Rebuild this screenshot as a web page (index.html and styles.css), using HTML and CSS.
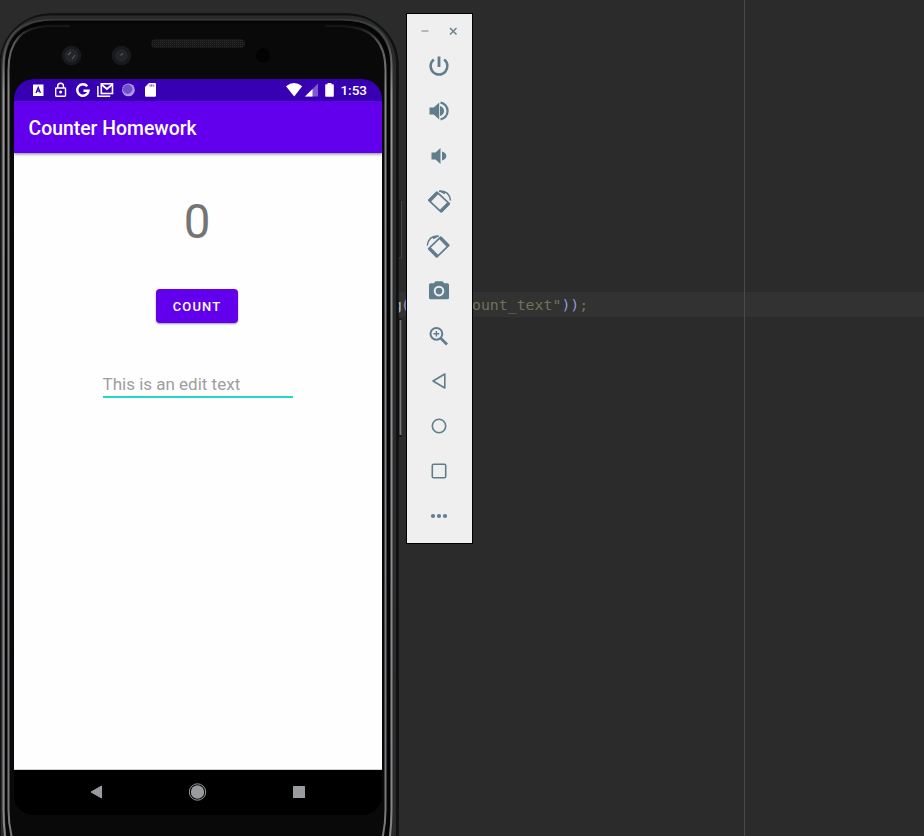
FILE: index.html
```html
<!DOCTYPE html>
<html lang="en">
<head>
<meta charset="utf-8">
<title>Counter Homework</title>
<link rel="stylesheet" href="styles.css">
</head>
<body>
<main class="desktop">
  <div class="code-line"><span class="code-start">g<b>(</b></span><span class="code-end">ount_text"<b>))</b>;</span></div>
  <div class="margin-guide"></div>

  <section class="phone">
    <svg class="frame" width="406" height="836" viewBox="0 0 406 836" fill="none">
      <defs>
        <linearGradient id="shine" x1="0" y1="0" x2="0" y2="1">
          <stop offset="0" stop-color="#3a3b3b"/><stop offset=".03" stop-color="#4c4c4c"/><stop offset=".09" stop-color="#97979a"/><stop offset="1" stop-color="#85858a"/>
        </linearGradient>
        <linearGradient id="inner" x1="0" y1="0" x2="0" y2="1">
          <stop offset="0" stop-color="#151515"/><stop offset=".02" stop-color="#555"/><stop offset=".08" stop-color="#88888c"/><stop offset="1" stop-color="#77777a"/>
        </linearGradient>
        <pattern id="mesh" width="2" height="2" patternUnits="userSpaceOnUse">
          <rect width="2" height="2" fill="#171717"/><rect width="1" height="1" fill="#2c2c2c"/>
        </pattern>
      </defs>
      <rect x="397" y="200" width="5" height="59" rx="1" fill="#202222"/>
      <path d="M401.500 201v57h-4" stroke="#454747"/>
      <rect x="397" y="319" width="5" height="118" rx="1" fill="#171717"/>
      <path d="M400.500 320v115" stroke="#777" stroke-width="2"/>
      <rect x="-.5" y="13.500" width="399" height="870" rx="52" fill="#090909"/>
      <rect x="1" y="15" width="396" height="867" rx="50" stroke="#101111" stroke-width="3"/>
      <rect x="3.500" y="18" width="390" height="861" rx="46" stroke="#292a2a" stroke-width="5"/>
      <path d="M5.500 840Q3.500 825 3.500 810V66Q3.500 20 52 20H344Q391.500 20 391.500 66V810Q391.500 825 389.500 840" stroke="url(#shine)" stroke-width="2"/>
      <path d="M9 840Q6.500 825 6.500 810V67Q6.500 22 56 22H340Q388.500 22 388.500 67V810Q388.500 825 386 840" stroke="#050505" stroke-width="3"/>
      <path d="M12.500 840Q8.500 825 8.500 810V70Q8.500 27 48 26H70M325 26H342Q385.500 27 385.500 70V810Q385.500 825 382 840" stroke="url(#inner)" stroke-width="2"/>
      <rect x="151" y="39" width="94" height="9" rx="4.500" fill="url(#mesh)"/>
      <g fill="#171a1c"><circle cx="71.500" cy="55.500" r="9.800"/><circle cx="121.500" cy="55.500" r="9.800"/></g>
      <g stroke="#292c2e" fill="#222426"><circle cx="71.500" cy="55.500" r="6"/><circle cx="121.500" cy="55.500" r="5.500"/></g>
      <path d="M68 55l3-3M72 59l3-4M120.500 55.500l2.500-2" stroke="#565a5c" stroke-width="1.200"/>
      <circle cx="263" cy="55.500" r="7" fill="#020202"/>
    </svg>

    <div class="screen">
      <header class="status-bar">
        <svg width="140" height="22" viewBox="28 79 140 22" fill="none" stroke="#fff">
          <rect x="33" y="84.500" width="10.500" height="11.500" fill="#fff" stroke="none"/>
          <path d="M36 93l2.200-5.500 2.200 5.500M36.800 91.200h2.800" stroke="#3700b3" stroke-width="1.300"/>
          <rect x="55.700" y="88" width="9.800" height="8.200" rx=".7" stroke-width="1.400"/>
          <path d="M57.700 88v-1.800a2.900 2.900 0 0 1 5.800 0V88" stroke-width="1.400"/><circle cx="60.600" cy="92" r="1.500" fill="#fff" stroke="none"/>
          <path d="M87.300 86.300a5.700 5.700 0 1 0 1.300 4.400H83.500" stroke-width="2.400"/>
          <path d="M97.900 86v10.200h12.300" stroke-width="1.500"/><rect x="101.300" y="83.800" width="11.200" height="9.700" stroke-width="1.600"/><path d="M101.500 84.500l5.400 4.500 5.400-4.500" stroke-width="1.800"/>
          <circle cx="128.400" cy="89.900" r="6.400" fill="#b19be4" stroke="none"/><circle cx="127.600" cy="89.200" r="4.800" fill="#7051cb" stroke="#9278d8" stroke-dasharray="1 1"/>
          <path d="M149 83h6a1.300 1.300 0 0 1 1 1v11.700a1.300 1.300 0 0 1-1 1h-9a1.300 1.300 0 0 1-1-1V87z" fill="#fff" stroke="none"/><path d="M149.500 85.500h5" stroke="#6c47ca" stroke-width="2" stroke-dasharray="1 .6"/>
        </svg>
        <div class="status-right">
          <svg width="50" height="22" viewBox="285 79 50 22">
            <path d="M286 86.200q8-6.400 16.200 0L294.200 96.500z" fill="#fff"/>
            <path d="M305 96.500L318 83.500v13z" fill="#8059ce"/><path d="M305 96.500l7.500-7.500v7.500z" fill="#fff"/>
            <path d="M327.500 83h4v1.200h1.500q.8 0 .8.800v11q0 .8-.8.800h-7q-.8 0-.8-.8V85q0-.8.8-.8h1.500z" fill="#fff"/>
          </svg>
          <span class="clock">1:53</span>
        </div>
      </header>
      <h1 class="app-bar">Counter Homework</h1>
      <div class="content">
        <div class="counter">0</div>
        <button class="count-button">COUNT</button>
        <div class="edit-text">This is an edit text</div>
      </div>
      <nav class="nav-bar">
        <svg width="20" height="20"><path d="M3 9L13.500 3v12z" fill="#999b9e" stroke="#999b9e" stroke-linejoin="round"/></svg>
        <svg width="20" height="20"><circle cx="8.500" cy="9" r="8.200" fill="none" stroke="#999b9e" stroke-width="1"/><circle cx="8.500" cy="9" r="6.700" fill="#999b9e"/></svg>
        <svg width="20" height="20"><rect x="4" y="3" width="12" height="12" rx=".6" fill="#999b9e"/></svg>
      </nav>
    </div>
  </section>

  <aside class="toolbar">
    <div class="window-controls">
      <svg width="12" height="12"><path d="M2.500 6h7" stroke="#9ba9af" stroke-width="1.500"/></svg>
      <svg width="12" height="12"><path d="M3 3l6.500 6.500M9.500 3L3 9.500" stroke="#6a828d" stroke-width="1.500"/></svg>
    </div>
    <div class="tools">
      <svg viewBox="0 0 30 30"><path d="M15 5.500v10.500" stroke-width="2.800"/><path d="M9.800 8.500a8.400 8.400 0 1 0 10.400 0" stroke-width="2.500"/></svg>
      <svg viewBox="0 0 30 30"><path d="M5.500 11.500h4.200l5.500-5v17l-5.500-5H5.500z" class="solid"/><path d="M16 10q4 1.300 4 5t-4 5z" class="solid"/><path d="M16.500 6.700a8.400 8.400 0 0 1 0 16.600" stroke-width="2.200"/></svg>
      <svg viewBox="0 0 30 30"><path d="M7.500 11.500h4l5-4.500v16l-5-4.500h-4z" class="solid"/><path d="M18 10.500q4.300 1.300 4.300 4.500T18 19.500z" class="solid"/></svg>
      <svg viewBox="0 0 30 30"><path d="M4.800 14.400l8.200-8.200L25.300 17.700l-8.200 8.200z" stroke-width="1.700" stroke-linejoin="round"/><path d="M5.500 14.700l7.800-7.800M16.800 25.200l7.800-7.800" stroke-width="3.400"/><path d="M15 5.200q10-1 11.500 9.300M16 5l5 2.500" stroke-width="1.500"/></svg>
      <svg viewBox="0 0 30 30"><path d="M24.800 14.400l-8.200-8.200L4.700 17.700l8.200 8.200z" stroke-width="1.700" stroke-linejoin="round"/><path d="M24.100 14.700l-7.800-7.800M13.200 25.200l-7.800-7.800" stroke-width="3.400"/><path d="M14.800 5.200Q4.800 4.200 3.300 14.500M14 5L9 7.500" stroke-width="1.500"/></svg>
      <svg viewBox="0 0 30 30"><path fill-rule="evenodd" class="solid" d="M11.500 5.300h7l1.700 2H23.500q1.500 0 1.500 1.500v13q0 1.500-1.500 1.500h-17Q5 23.300 5 21.800v-13Q5 7.300 6.500 7.300h3.300zM15 9.800a5.300 5.300 0 1 0 0 10.600 5.300 5.300 0 0 0 0-10.600z"/><circle cx="15" cy="15.100" r="3.300" class="solid"/></svg>
      <svg viewBox="0 0 30 30"><circle cx="12.400" cy="12.800" r="5.900" stroke-width="2"/><path d="M16.500 17l6.500 6.500" stroke-width="2.700"/><path d="M9.500 12.800h5.800M12.400 10v5.600" stroke-width="1.400"/></svg>
      <svg viewBox="0 0 30 30"><path d="M9 15L20.800 8v14z" stroke-width="1.600" stroke-linejoin="round"/></svg>
      <svg viewBox="0 0 30 30"><circle cx="15" cy="15" r="6.700" stroke-width="1.600"/></svg>
      <svg viewBox="0 0 30 30"><rect x="8.300" y="8.300" width="13.400" height="13.400" rx="1.300" stroke-width="1.600"/></svg>
      <svg viewBox="0 0 30 30"><g class="solid"><circle cx="9" cy="15" r="2.100"/><circle cx="15" cy="15" r="2.100"/><circle cx="21" cy="15" r="2.100"/></g></svg>
    </div>
  </aside>
</main>
</body>
</html>
```
FILE: styles.css
```css
* { box-sizing: border-box; }
body { margin: 0; background: #2b2b2b; }
svg { display: block; flex: none; }
.desktop {
  position: relative;
  width: 924px;
  height: 836px;
  overflow: hidden;
  background: #2b2b2b;
  font-family: Roboto, sans-serif;
}
.code-line {
  position: absolute;
  top: 292px;
  left: 0;
  width: 100%;
  height: 25px;
  padding-left: 393px;
  display: flex;
  background: #323232;
  color: #6e7359;
  font: 14.850px/26px "DejaVu Sans Mono", monospace;
}
.code-line b { font-weight: 400; color: #9597d0; }
.code-start { width: 79px; color: #a9b7c6; }
.code-start b { margin-left: -1px; }
.margin-guide {
  position: absolute;
  left: 744px;
  top: 0;
  width: 1px;
  height: 100%;
  background: #4a4a4a;
}
.phone { position: absolute; left: 0; top: 0; width: 406px; height: 836px; }
.frame { position: absolute; inset: 0; }
.screen {
  position: absolute;
  left: 14px;
  top: 79px;
  width: 368px;
  height: 736px;
  display: flex;
  flex-direction: column;
  overflow: hidden;
  border-radius: 20px;
  background: #000;
}
.status-bar {
  height: 22px;
  padding: 0 15px 0 14px;
  display: flex;
  justify-content: space-between;
  background: #3700b3;
}
.status-right { display: flex; gap: 5px; }
.clock { color: #fff; font-size: 13.500px; font-weight: 500; line-height: 23px; }
.app-bar {
  position: relative;
  height: 52px;
  margin: 0;
  padding-left: 14.500px;
  background: #6200ee;
  color: #fff;
  font-size: 19.400px;
  font-weight: 500;
  line-height: 55px;
  box-shadow: 0 1px 3px rgba(0, 0, 0, .5);
}
.content {
  flex: 1;
  padding: 39px 2px 0 0;
  display: flex;
  flex-direction: column;
  align-items: center;
  border-bottom: 1px solid #ccd0d0;
  background: #fefefe;
}
.counter { height: 60px; color: #747474; font-size: 47.500px; line-height: 60px; }
.count-button {
  width: 82px;
  height: 34px;
  margin-top: 37px;
  padding: 2px 0 0;
  border: 0;
  border-radius: 4px;
  background: #6200ee;
  color: #fff;
  font: 500 13px/32px Roboto, sans-serif;
  letter-spacing: 1.150px;
  box-shadow: 0 1px 2px rgba(0, 0, 0, .4);
}
.edit-text {
  width: 190px;
  height: 28px;
  margin: 47px -1px 0 0;
  border-bottom: 2px solid #26d6c6;
  color: #9d9f9f;
  font-size: 17px;
  line-height: 29px;
}
.nav-bar {
  height: 45px;
  padding: 13px 73px 0 74px;
  display: flex;
  justify-content: space-between;
  background: #000;
}
.toolbar {
  position: absolute;
  left: 406px;
  top: 13px;
  width: 67px;
  height: 531px;
  border: 1px solid #000;
  background: #efefef;
}
.window-controls { height: 37px; padding: 11px 13px 0 12px; display: flex; justify-content: space-between; }
.tools { padding-right: 1px; display: flex; flex-direction: column; align-items: center; gap: 15px; }
.tools svg { width: 30px; height: 30px; fill: none; stroke: #607d8b; }
.tools .solid { fill: #607d8b; stroke: none; }
```
